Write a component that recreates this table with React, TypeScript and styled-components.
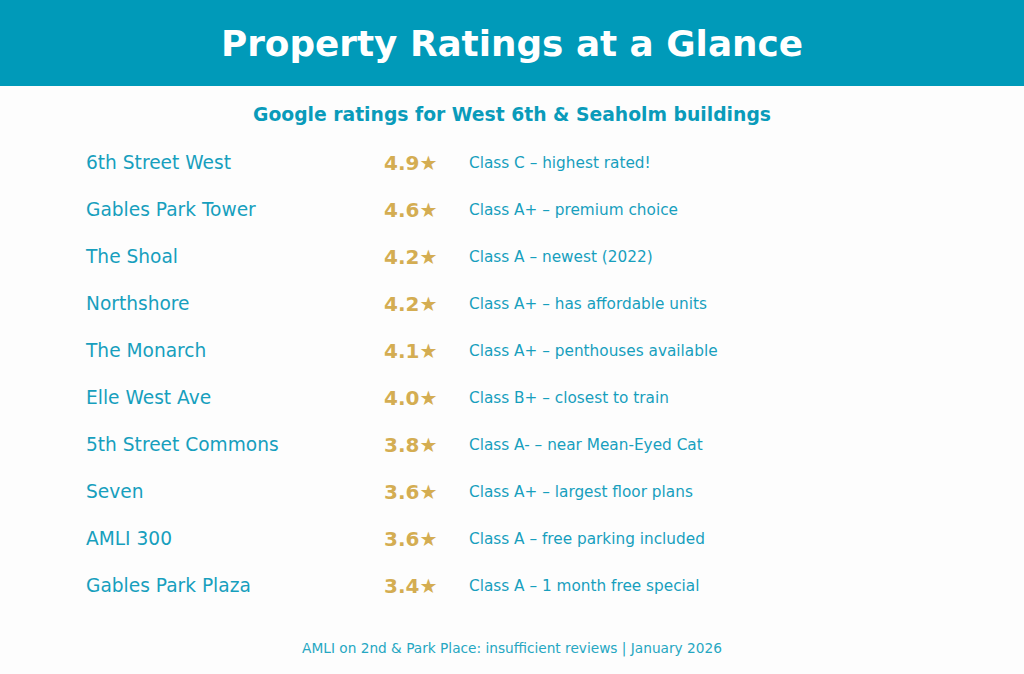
import React from "react";
import styled, { createGlobalStyle } from "styled-components";

const Global = createGlobalStyle`
  html, body { margin: 0; padding: 0; background: #fdfdfd; }
  body { font-family: "DejaVu Sans", "Liberation Sans", sans-serif; }
`;

const Page = styled.div`
  width: 1024px;
  height: 674px;
  display: flex;
  flex-direction: column;
  background: #fdfdfd;
`;

const Header = styled.header`
  height: 86px;
  background: #009ab9;
  display: flex;
  align-items: center;
  justify-content: center;
`;

const Title = styled.h1`
  margin: 0;
  color: #ffffff;
  font-size: 35.8px;
  font-weight: bold;
`;

const Subtitle = styled.h2`
  margin: 0;
  padding-top: 17px;
  height: 24px;
  line-height: 24px;
  text-align: center;
  color: #0a9bba;
  font-size: 18.75px;
  font-weight: bold;
`;

const Table = styled.div`
  display: grid;
  grid-template-columns: 298px 85px 1fr;
  grid-auto-rows: 47px;
  margin-top: 12px;
  padding-left: 86px;
  align-items: center;
`;

const Name = styled.div`
  color: #179fbd;
  font-size: 18.6px;
`;

const Rating = styled.div`
  color: #d4ad52;
  font-size: 20px;
  font-weight: bold;
`;

const Note = styled.div`
  color: #179fbd;
  font-size: 15.3px;
`;

const Footer = styled.footer`
  margin-top: 31px;
  height: 16px;
  line-height: 16px;
  text-align: center;
  color: #26a7c2;
  font-size: 13.7px;
`;

const rows: [string, string, string][] = [
  ["6th Street West", "4.9", "Class C – highest rated!"],
  ["Gables Park Tower", "4.6", "Class A+ – premium choice"],
  ["The Shoal", "4.2", "Class A – newest (2022)"],
  ["Northshore", "4.2", "Class A+ – has affordable units"],
  ["The Monarch", "4.1", "Class A+ – penthouses available"],
  ["Elle West Ave", "4.0", "Class B+ – closest to train"],
  ["5th Street Commons", "3.8", "Class A- – near Mean-Eyed Cat"],
  ["Seven", "3.6", "Class A+ – largest floor plans"],
  ["AMLI 300", "3.6", "Class A – free parking included"],
  ["Gables Park Plaza", "3.4", "Class A – 1 month free special"],
];

export default function App() {
  return (
    <Page>
      <Global />
      <Header>
        <Title>Property Ratings at a Glance</Title>
      </Header>
      <Subtitle>Google ratings for West 6th &amp; Seaholm buildings</Subtitle>
      <Table>
        {rows.map(([n, r, c]) => (
          <React.Fragment key={n}>
            <Name>{n}</Name>
            <Rating>{r}★</Rating>
            <Note>{c}</Note>
          </React.Fragment>
        ))}
      </Table>
      <Footer>AMLI on 2nd &amp; Park Place: insufficient reviews | January 2026</Footer>
    </Page>
  );
}
